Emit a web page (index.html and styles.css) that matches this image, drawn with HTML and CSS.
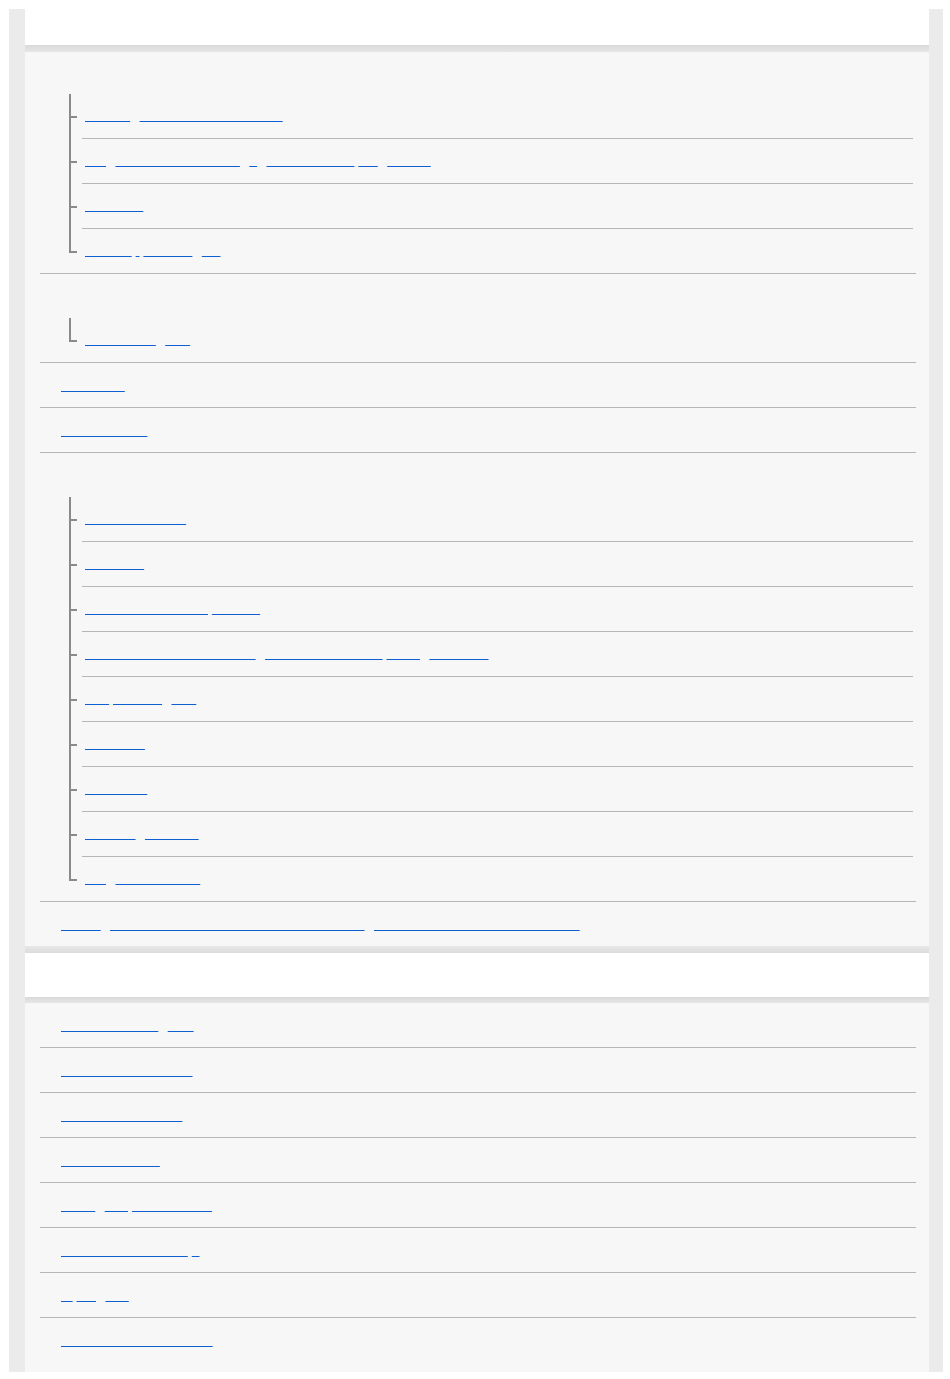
FILE: index.html
```html
<!DOCTYPE html>
<html lang="en">
<head>
  <meta charset="UTF-8" />
  <meta name="viewport" content="width=device-width, initial-scale=1.0"/>
  <title>Help Guide</title>
  <link rel="stylesheet" href="styles.css">
</head>
<body>

  <div class="page">

    <header class="topbar">Help Guide</header>

    <div class="panel">
      <ul class="menu">
        <li>
          <div class="label">Getting Started</div>
          <ul class="sub">
            <li><a href="#"><span>Getting</span> <span>started with the service</span></a></li>
            <li><a href="#"><span>Set</span> <span>up your devices first</span> <span>a</span> <span>home network</span> <span class="s">the</span> <span>access</span></a></li>
            <li><a href="#"><span>Networks</span></a></li>
            <li><a href="#"><span>Backup</span> <span class="s">/</span> <span class="s">Restore</span> <span>log</span></a></li>
          </ul>
        </li>
        <li>
          <div class="label">Connections</div>
          <ul class="sub">
            <li><a href="#"><span>Connecting</span> <span>TVs</span></a></li>
          </ul>
        </li>
        <li><a href="#"><span>Messages</span></a></li>
        <li><a href="#"><span>Specifications</span></a></li>
        <li>
          <div class="label">Using the Camera</div>
          <ul class="sub">
            <li><a href="#"><span>Shooting modes</span></a></li>
            <li><a href="#"><span>Exposure</span></a></li>
            <li><a href="#"><span>Adjusting the image</span> <span class="s">settings</span></a></li>
            <li><a href="#"><span>Transferring images to your</span> <span>computer or phone</span> <span class="s">using</span> <span>Bluetooth</span></a></li>
            <li><a href="#"><span>Edit</span> <span class="s">pictures</span> <span>with</span></a></li>
            <li><a href="#"><span>Self-timer</span></a></li>
            <li><a href="#"><span>Autofocus</span></a></li>
            <li><a href="#"><span>Memory</span> <span>recovery</span></a></li>
            <li><a href="#"><span>Set</span> <span>date and time</span></a></li>
          </ul>
        </li>
        <li><a href="#"><span>Safety</span> <span>information and precautions for safer use</span> <span>Trademarks and software license</span></a></li>
      </ul>
    </div>

    <h2 class="head">Support</h2>

    <div class="panel last">
      <ul class="menu">
        <li><a href="#"><span>Support articles</span> <span>Tips</span></a></li>
        <li><a href="#"><span>Download user guide</span></a></li>
        <li><a href="#"><span>Product registration</span></a></li>
        <li><a href="#"><span>Contact support</span></a></li>
        <li><a href="#"><span>Legal</span> <span>and</span> <span class="s">cookie policy</span></a></li>
        <li><a href="#"><span>Accessibility support</span> <span class="s">&raquo;</span></a></li>
        <li><a href="#"><span>In</span> <span class="s">the</span> <span>app</span></a></li>
        <li><a href="#"><span>Customer service center</span></a></li>
      </ul>
    </div>

  </div>

</body>
</html>
```

FILE: styles.css
```css
body {
  margin: 0;
  background: #fff;
  font-family: "Liberation Sans", Arial, sans-serif;
  font-size: 14px;
  line-height: 20px;
}

.page {
  margin: 9px 7px 0 9px;
  padding: 0 14px 0 16px;
  background: #ebebeb;
}

.topbar {
  position: relative;
  z-index: 1;
  height: 43px;
  padding-left: 16px;
  background: linear-gradient(#fff 0, #fff 36px, #d9d9d9 36px, #e6e6e6 43px);
  color: transparent;
  font-size: 16px;
  line-height: 36px;
}

.head {
  height: 44px;
  margin: 0;
  padding: 7px 16px 6px;
  background: linear-gradient(#e7e7e7 0, #dcdcdc 7px, #fff 7px, #fff 51px, #d9d9d9 51px, #e6e6e6 57px);
  color: transparent;
  font-size: 16px;
  line-height: 44px;
}

.panel {
  background: #f7f7f7;
}

.topbar + .panel {
  margin-top: -2px;
}

.panel.last {
  padding-bottom: 10px;
}

.menu {
  list-style: none;
  margin: 0 13px 0 15px;
  padding: 0;
}

.menu > li {
  border-bottom: 1px solid #b6b6b6;
}

.menu > li:last-child {
  border-bottom: none;
}

.menu a, .menu .label {
  display: block;
  padding: 12px 0 12px 21px;
  color: transparent;
  text-decoration: none;
}

.menu a span {
  text-decoration: underline 1px #0d5fd3;
  text-decoration-skip-ink: none;
}

.menu a span + span {
  margin-left: 5.5px;
}

.menu a span.s {
  margin-left: 0;
}

/* tree list */
.sub {
  list-style: none;
  margin: 0 3px 0 42px;
  padding: 0;
}

.sub li {
  position: relative;
  border-bottom: 1px solid #b6b6b6;
}

.sub li:last-child {
  border-bottom: none;
}

.menu .sub a {
  padding: 11px 0 13px 3px;
}

.sub li::before {
  content: "";
  position: absolute;
  left: -13px;
  top: 0;
  width: 6px;
  height: 22px;
  border-left: 2px solid #8a8a8a;
  border-bottom: 2px solid #8a8a8a;
}

.sub li::after {
  content: "";
  position: absolute;
  left: -13px;
  top: 22px;
  bottom: -1px;
  border-left: 2px solid #8a8a8a;
}

.sub li:last-child::after {
  display: none;
}
```
